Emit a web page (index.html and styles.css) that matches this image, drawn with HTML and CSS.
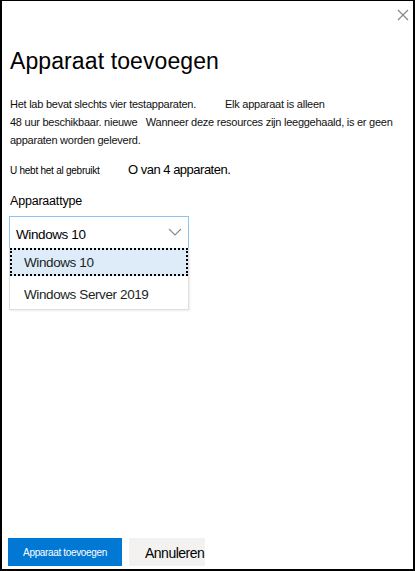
FILE: index.html
```html
<!DOCTYPE html>
<html lang="nl">
<head>
<meta charset="utf-8">
<link rel="stylesheet" href="styles.css">
</head>
<body>
<div class="panel">
  <div class="top">
    <button class="close" aria-label="Sluiten">
      <svg width="12" height="12" viewBox="0 0 12 12"><path d="M1 1L11 11M11 1L1 11" stroke="#8a8886" stroke-width="1.2" fill="none"/></svg>
    </button>
  </div>
  <h1 class="title">Apparaat toevoegen</h1>
  <p class="intro">Het lab bevat slechts vier testapparaten.<span class="gap1"></span>Elk apparaat is alleen<br>48 uur beschikbaar. nieuwe&nbsp;&nbsp; Wanneer deze resources zijn leeggehaald, is er geen<br>apparaten worden geleverd.</p>
  <div class="usage"><span class="used">U hebt het al gebruikt</span><span class="count">O van 4 apparaten.</span></div>
  <label class="label">Apparaattype</label>
  <div class="select">
    <div class="select-box">
      <span>Windows 10</span>
      <svg class="chev" width="14" height="8" viewBox="0 0 14 8"><path d="M1 1L7 7L13 1" stroke="#8a8886" stroke-width="1.1" fill="none"/></svg>
    </div>
    <ul class="options">
      <li class="opt active">Windows 10</li>
      <li class="opt second">Windows Server 2019</li>
    </ul>
  </div>
  <div class="spacer"></div>
  <div class="actions">
    <button class="btn primary">Apparaat toevoegen</button>
    <button class="btn secondary">Annuleren</button>
  </div>
</div>
</body>
</html>
```
FILE: styles.css
```css
* { box-sizing: border-box; }
html, body { margin: 0; padding: 0; background: #fff; }
body { font-family: "Liberation Sans", Arial, sans-serif; color: #000; }
.panel {
  width: 415px;
  height: 571px;
  border: 2px solid #000;
  border-top-width: 1px;
  display: flex;
  flex-direction: column;
  padding: 0 0 2px 6px;
}
.top { display: flex; justify-content: flex-end; height: 26px; padding: 7px 3px 0 0; }
.close { border: 0; background: none; padding: 0; width: 14px; height: 14px; display: flex; align-items: center; justify-content: center; }
.title { font-size: 23px; font-weight: 400; margin: 20px 0 0 2px; line-height: 28px; letter-spacing: 0.1px; }
.intro { font-size: 11px; line-height: 18px; margin: 20px 0 0 2px; color: #111; letter-spacing: -0.25px; }
.gap1 { display: inline-block; width: 29px; }
.usage { display: flex; align-items: baseline; margin: 13px 0 0 2px; }
.used { font-size: 10px; width: 118px; letter-spacing: -0.25px; }
.count { font-size: 13px; letter-spacing: -0.5px; }
.label { font-size: 12.5px; margin: 16px 0 0 2px; display: block; line-height: 16px; letter-spacing: -0.2px; }
.select { width: 180px; margin: 7px 0 0 1px; }
.select-box {
  height: 32px; border: 1px solid #8cc3f0; border-bottom: 0;
  display: flex; align-items: center; justify-content: space-between;
  padding: 3px 6px 0 6px; font-size: 13.5px; letter-spacing: -0.4px;
}
.chev { margin-top: -4px; }
.options { list-style: none; margin: 0; padding: 0; border: 1px solid #e1dfdd; border-top: 0; box-shadow: 1px 1px 2px rgba(0,0,0,0.08); }
.opt { height: 33px; display: flex; align-items: center; padding-left: 14px; font-size: 13.5px; color: #201f1e; letter-spacing: -0.4px; }
.opt.second { padding-top: 4px; }
.opt.active { background: #deecf9; outline: 2px dotted #000; outline-offset: -2px; height: 28px; }
.spacer { flex: 1; }
.actions { display: flex; gap: 7px; margin: 0 0 1px 0; }
.btn { height: 28px; border: 0; font-family: inherit; padding: 0; }
.primary { width: 114px; background: #0078d4; color: #fff; font-size: 10px; letter-spacing: -0.35px; }
.secondary { width: 76px; background: #f3f2f1; color: #000; font-size: 14px; padding-left: 16px; text-align: left; padding-top: 2px; white-space: nowrap; letter-spacing: -0.5px; }
```
